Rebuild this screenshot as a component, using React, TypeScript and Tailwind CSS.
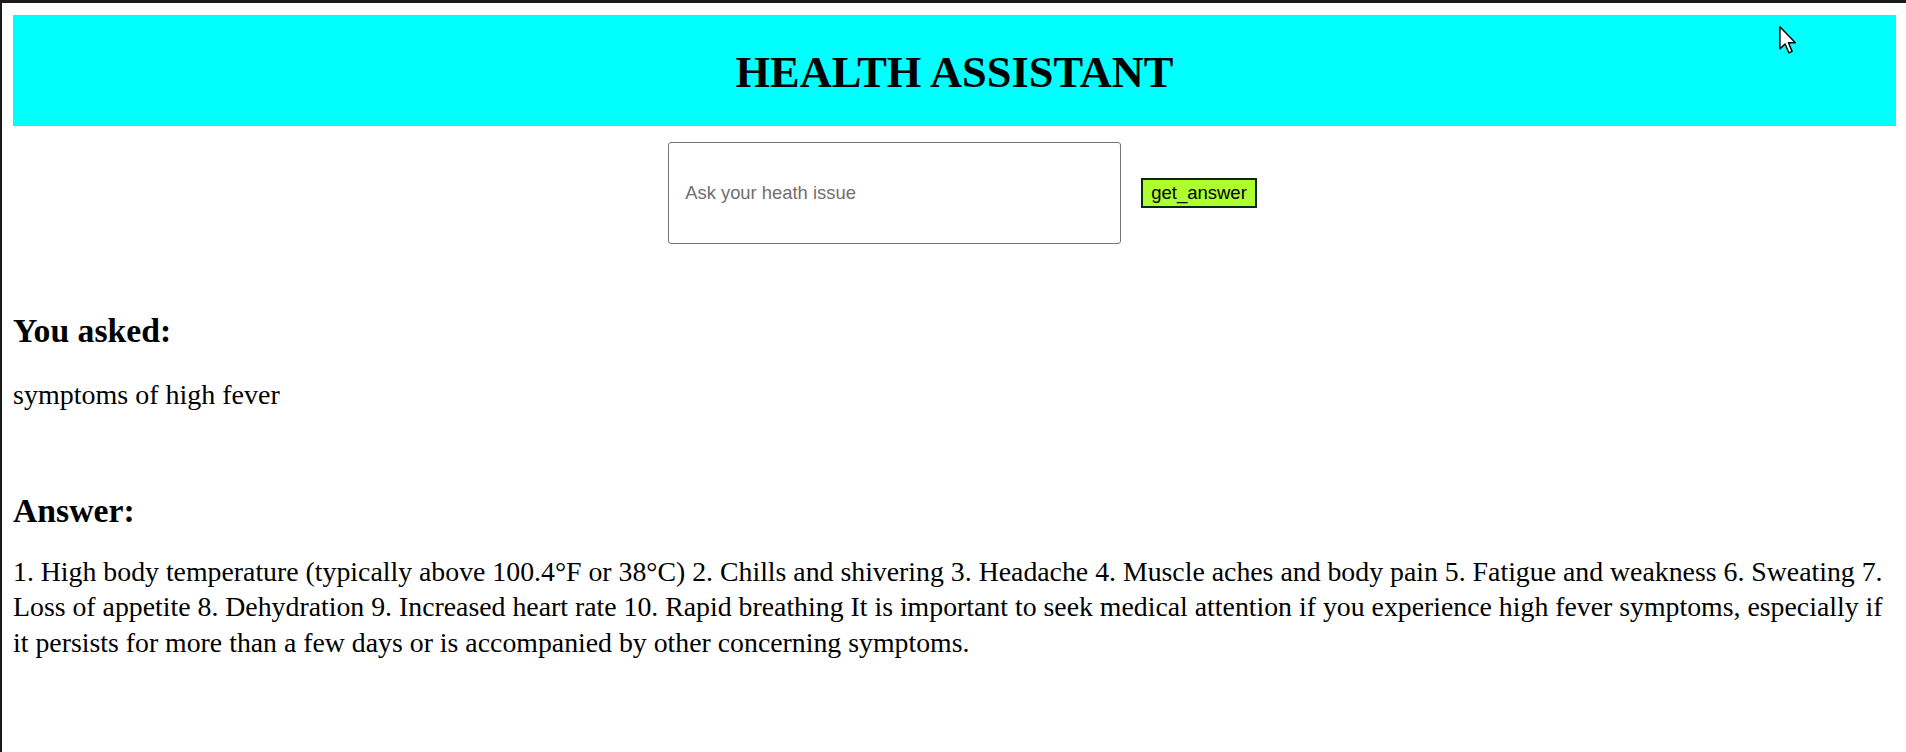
import React from "react";

function Cursor() {
  return (
    <svg
      className="absolute left-[1777px] top-[23px]"
      width="18"
      height="28"
      viewBox="0 0 12 19"
    >
      <path
        d="M0.5 0.5 L0.5 15.5 L4 12.2 L6.6 18.2 L8.8 17.2 L6.3 11.4 L11 11.4 Z"
        fill="#ffffff"
        stroke="#000000"
        strokeWidth="1"
        strokeLinejoin="round"
      />
    </svg>
  );
}

export default function App() {
  return (
    <div
      className="relative min-h-[752px] bg-white border-l-2 border-t-[3px] border-[#1a1a1a] text-black"
      style={{ fontFamily: '"Liberation Serif", "Times New Roman", serif' }}
    >
      <Cursor />
      <div className="ml-[11px] mr-[10px] mt-[12px] h-[111px] bg-[#00ffff] flex items-center justify-center">
        <h1 className="text-[44.4px] font-bold leading-none pt-[3px]">HEALTH ASSISTANT</h1>
      </div>

      <div className="mt-[16px] flex items-center justify-center gap-[20px] pl-[17px]">
        <div className="w-[453px] h-[102px] border border-[#767676] rounded-[3px] flex items-center pl-[16px]">
          <span
            className="text-[18.4px] text-[#6f6f6f]"
            style={{ fontFamily: '"Liberation Sans", Arial, sans-serif' }}
          >
            Ask your heath issue
          </span>
        </div>
        <button
          className="h-[30px] px-[8px] bg-[#adff2f] border-2 border-[#0b2a0b] text-[18.5px] leading-none text-black"
          style={{ fontFamily: '"Liberation Sans", Arial, sans-serif' }}
        >
          get_answer
        </button>
      </div>

      <div className="pl-[11px] pr-[10px]">
        <h2 className="mt-[67px] text-[33.7px] font-bold leading-[40px]">You asked:</h2>
        <p className="mt-[26px] text-[28px] leading-[35.5px]">symptoms of high fever</p>
        <h2 className="mt-[78px] text-[33.7px] font-bold leading-[40px]">Answer:</h2>
        <p className="mt-[23px] text-[27.8px] leading-[35.5px]">
          1. High body temperature (typically above 100.4°F or 38°C) 2. Chills and shivering 3. Headache 4. Muscle aches and body pain 5. Fatigue and weakness 6. Sweating 7. Loss of appetite 8. Dehydration 9. Increased heart rate 10. Rapid breathing It is important to seek medical attention if you experience high fever symptoms, especially if it persists for more than a few days or is accompanied by other concerning symptoms.
        </p>
      </div>
    </div>
  );
}
